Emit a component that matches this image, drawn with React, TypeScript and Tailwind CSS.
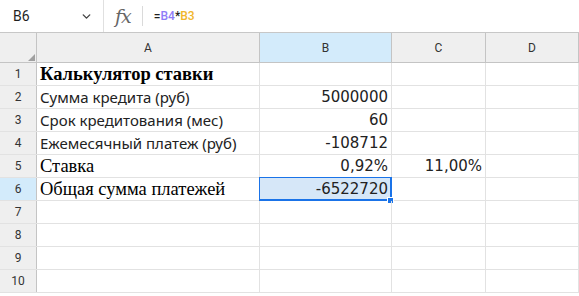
import { ChevronDown } from 'lucide-react';

// Column layout: row header + A..D
const cols = [
  { key: 'A', width: 'w-[223px]' },
  { key: 'B', width: 'w-[132px]' },
  { key: 'C', width: 'w-[94px]' },
  { key: 'D', width: 'flex-1' },
];

type Cell = { text: string; className?: string };

const sans = "font-['Noto_Sans',sans-serif] text-[15px] text-[#222]";
const num = "font-['DejaVu_Sans',sans-serif] text-[15px] text-[#222]";
const serif = "font-['Liberation_Serif',serif] text-[18.5px] text-black";

const rows: Record<string, Cell>[] = [
  { A: { text: 'Калькулятор ставки', className: `${serif} font-bold` } },
  { A: { text: 'Сумма кредита (руб)', className: sans }, B: { text: '5000000', className: num } },
  { A: { text: 'Срок кредитования (мес)', className: sans }, B: { text: '60', className: num } },
  { A: { text: 'Ежемесячный платеж (руб)', className: sans }, B: { text: '-108712', className: num } },
  {
    A: { text: 'Ставка', className: serif },
    B: { text: '0,92%', className: num },
    C: { text: '11,00%', className: num },
  },
  { A: { text: 'Общая сумма платежей', className: serif }, B: { text: '-6522720', className: num } },
  {},
  {},
  {},
  {},
];

export default function App() {
  return (
    <div className="w-[579px] h-[296px] overflow-hidden bg-white font-['Roboto',sans-serif] flex flex-col">
      {/* Formula bar */}
      <div className="h-[33px] flex items-stretch border-b border-[#c7c7c7] shrink-0">
        <div className="w-[104px] flex items-center justify-between pl-[13px] pr-[10px] border-r border-[#e0e0e0]">
          <span className="text-[14px] text-[#1f1f1f]">B6</span>
          <ChevronDown size={13} strokeWidth={2.6} className="text-[#444]" />
        </div>
        <div className="flex items-center pl-[11px]">
          <span className="font-['DejaVu_Serif',serif] italic text-[19px] text-[#666] tracking-[-1px] leading-none">fx</span>
          <div className="w-px h-[20px] bg-[#dadada] ml-[11px] mr-[11px]" />
          <span className="text-[12px] font-medium text-[#1f1f1f]">
            =<span className="text-[#8e7cf8]">B4</span>*<span className="text-[#f1b62b]">B3</span>
          </span>
        </div>
      </div>

      {/* Column headers */}
      <div className="h-[30px] flex shrink-0 border-b border-[#c4c4c4] bg-[#efefef]">
        <div className="w-[37px] border-r border-[#c4c4c4] relative shrink-0">
          <div className="absolute right-[1px] bottom-[1px] w-0 h-0 border-l-[7px] border-l-transparent border-b-[7px] border-b-[#a0a0a0]" />
        </div>
        {cols.map((c) => (
          <div
            key={c.key}
            className={`${c.width} shrink-0 flex items-center justify-center text-[12px] text-[#333] border-r border-[#c4c4c4] ${
              c.key === 'B' ? 'bg-[#d3ebfb]' : ''
            }`}
          >
            {c.key}
          </div>
        ))}
      </div>

      {/* Rows */}
      {rows.map((row, i) => (
        <div key={i} className="h-[23px] flex shrink-0 border-b border-[#e2e2e2]">
          <div
            className={`w-[37px] shrink-0 flex items-center justify-center text-[12px] text-[#333] border-r border-[#c4c4c4] ${
              i === 5 ? 'bg-[#d3ebfb]' : 'bg-[#efefef]'
            }`}
          >
            {i + 1}
          </div>
          {cols.map((c) => {
            const cell = row[c.key];
            const selected = i === 5 && c.key === 'B';
            return (
              <div
                key={c.key}
                className={`${c.width} shrink-0 relative flex items-end pb-[1px] px-[3px] border-r border-[#e2e2e2] whitespace-nowrap ${
                  c.key === 'A' ? 'justify-start' : 'justify-end'
                } ${selected ? 'bg-[#d6e7f8]' : ''}`}
              >
                {selected && (
                  <>
                    <div className="absolute -left-[1px] -top-[1px] -right-[1px] -bottom-[1px] border-[1px] border-[#1a73e8] border-r-2 border-b-2 pointer-events-none" />
                    <div className="absolute -right-[3px] -bottom-[4px] w-[5px] h-[5px] bg-[#1a73e8] border border-white box-content" />
                  </>
                )}
                {cell && <span className={`${cell.className} leading-[20px]`}>{cell.text}</span>}
              </div>
            );
          })}
        </div>
      ))}
    </div>
  );
}
